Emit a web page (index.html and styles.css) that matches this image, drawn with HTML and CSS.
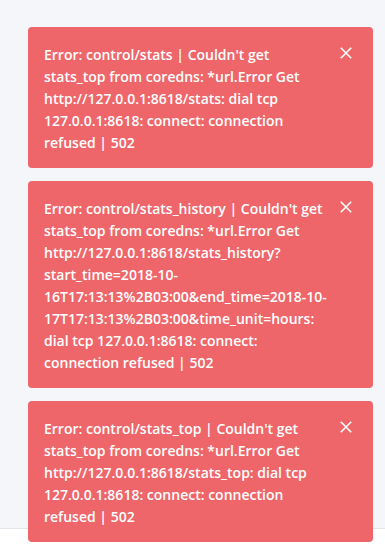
FILE: index.html
```html
<!DOCTYPE html>
<html lang="en">
<head>
<meta charset="utf-8">
<title>Errors</title>
<link rel="stylesheet" href="styles.css">
</head>
<body>
<main class="page"></main>
<footer class="footer"></footer>
<div class="toasts">
  <div class="toast">
    <div class="toast-text">Error: control/stats | Couldn't get stats_top from coredns: *url.Error Get http://127.0.0.1:8618/stats: dial tcp 127.0.0.1:8618: connect: connection refused | 502</div>
    <button class="toast-close" aria-label="Close"><svg width="12" height="12" viewBox="0 0 12 12"><path d="M0.8 0.8L11.2 11.2M11.2 0.8L0.8 11.2" stroke="#fff" stroke-width="1.6" fill="none"/></svg></button>
  </div>
  <div class="toast">
    <div class="toast-text">Error: control/stats_history | Couldn't get stats_top from coredns: *url.Error Get http://127.0.0.1:8618/stats_history?start_time=2018-10-16T17:13:13%2B03:00&amp;end_time=2018-10-17T17:13:13%2B03:00&amp;time_unit=hours: dial tcp 127.0.0.1:8618: connect: connection refused | 502</div>
    <button class="toast-close" aria-label="Close"><svg width="12" height="12" viewBox="0 0 12 12"><path d="M0.8 0.8L11.2 11.2M11.2 0.8L0.8 11.2" stroke="#fff" stroke-width="1.6" fill="none"/></svg></button>
  </div>
  <div class="toast">
    <div class="toast-text">Error: control/stats_top | Couldn't get stats_top from coredns: *url.Error Get http://127.0.0.1:8618/stats_top: dial tcp 127.0.0.1:8618: connect: connection refused | 502</div>
    <button class="toast-close" aria-label="Close"><svg width="12" height="12" viewBox="0 0 12 12"><path d="M0.8 0.8L11.2 11.2M11.2 0.8L0.8 11.2" stroke="#fff" stroke-width="1.6" fill="none"/></svg></button>
  </div>
</div>
</body>
</html>
```
FILE: styles.css
```css
html, body {
  margin: 0;
  padding: 0;
}
body {
  background: #f5f6fa;
  font-family: "Open Sans", "Noto Sans", sans-serif;
  height: 552px;
  overflow: hidden;
}
.page {
  height: 528px;
}
.footer {
  height: 24px;
  background: #fff;
  border-top: 1px solid #e3e5ea;
}
.toasts {
  position: fixed;
  top: 27px;
  left: 28px;
  width: 345px;
  display: flex;
  flex-direction: column;
  gap: 13px;
}
.toast {
  background: #ee6669;
  border-radius: 4px;
  padding: 17px 40px 14px 16px;
  position: relative;
  color: #fff;
}
.toast-text {
  font-size: 14px;
  font-weight: 600;
  line-height: 22px;
  word-break: break-word;
}
.toast-close {
  position: absolute;
  top: 19px;
  right: 20px;
  width: 14px;
  height: 14px;
  padding: 0;
  border: 0;
  background: none;
  display: flex;
  align-items: center;
  justify-content: center;
}
```
